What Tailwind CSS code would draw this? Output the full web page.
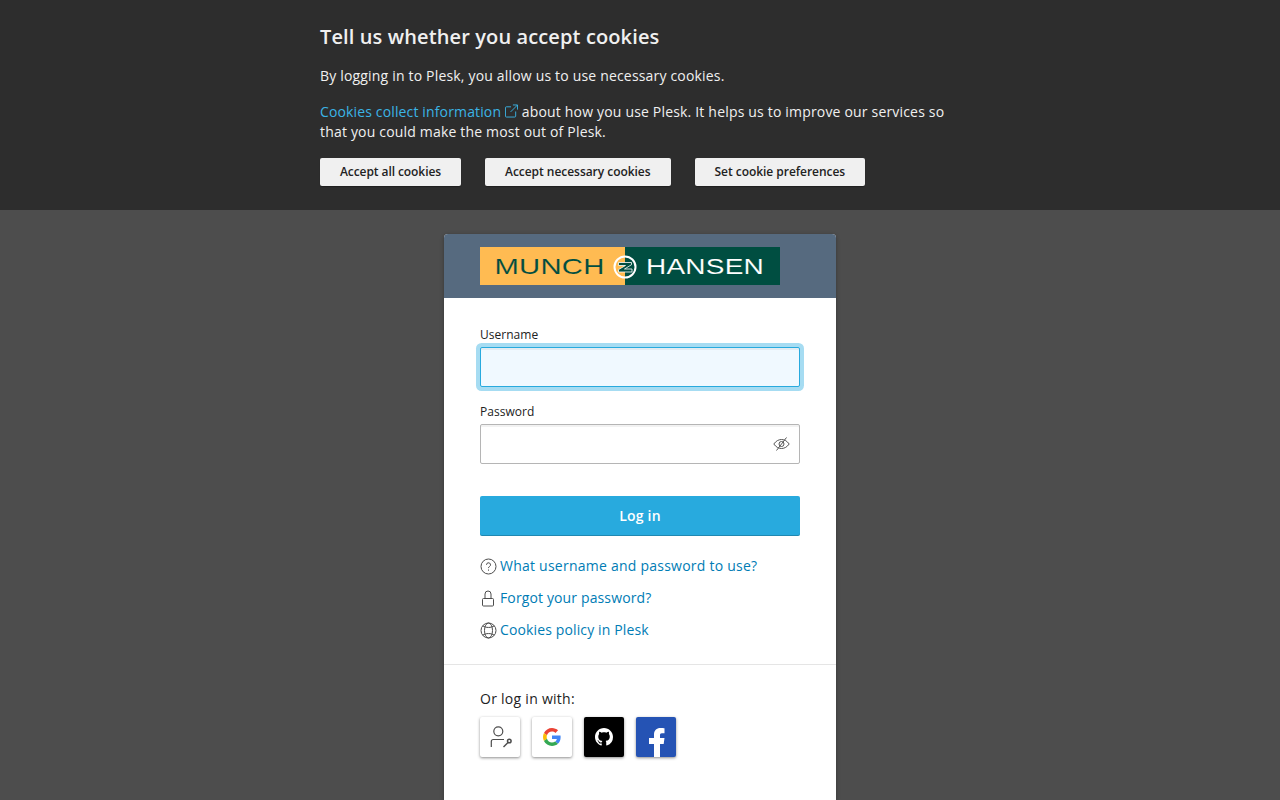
<!DOCTYPE html>
<html lang="en">
<head>
  <meta charset="UTF-8">
  <meta name="viewport" content="width=device-width, initial-scale=1.0">
  <title>Log in to Plesk</title>
  <script src="https://cdn.jsdelivr.net/npm/@tailwindcss/browser@4"></script>
</head>
<body class="h-[800px] overflow-hidden bg-[#4d4d4d] font-['Open_Sans',sans-serif] text-[14px] leading-[20px] tracking-[0.18px] text-[#222222]">

  <!-- Cookie banner -->
  <section class="h-[210px] bg-[#2d2d2d] pl-[320px] pt-[21px] text-[#f0f0f0]">
    <div class="w-[640px]">
      <h2 class="mb-[13px] text-[20px] leading-[32px] font-semibold tracking-[0.12px]">Tell us whether you accept cookies</h2>
      <p class="mb-[16px]">By logging in to Plesk, you allow us to use necessary cookies.</p>
      <p class="mb-[16px]">
        <a href="#" class="tracking-[0.14px] text-[#3bb4e6]">Cookies collect information
          <svg class="inline-block align-[-1px]" width="13" height="14" viewBox="0 0 14 14" fill="none" stroke="#3bb4e6"><path d="M6.500 2.500H1.500a1 1 0 0 0-1 1v9a1 1 0 0 0 1 1h9a1 1 0 0 0 1-1V7.500M8.500.5h5v5M13.500.5L6 8"/></svg></a>
        about how you use Plesk. It helps us to improve our services so that you could make the most out of Plesk.
      </p>
      <div class="flex gap-[24px] tracking-[-0.04px]">
        <button class="h-[28px] rounded-[2px] bg-[#f0f0f0] px-[20px] text-[12px] font-semibold tracking-[-0.08px] text-[#222222] shadow-[0_1px_1px_rgba(0,0,0,0.3)]">Accept all cookies</button>
        <button class="h-[28px] rounded-[2px] bg-[#f0f0f0] px-[20px] text-[12px] font-semibold text-[#222222] shadow-[0_1px_1px_rgba(0,0,0,0.3)]">Accept necessary cookies</button>
        <button class="h-[28px] rounded-[2px] bg-[#f0f0f0] px-[20px] text-[12px] font-semibold text-[#222222] shadow-[0_1px_1px_rgba(0,0,0,0.3)]">Set cookie preferences</button>
      </div>
    </div>
  </section>

  <!-- Login card -->
  <main class="mx-auto mt-[24px] w-[392px] overflow-hidden rounded-t-[4px] bg-white shadow-[0_1px_4px_rgba(0,0,0,0.3)]">
    <div class="flex h-[64px] items-center bg-[#566a7f] pl-[36px]">
      <svg width="300" height="38" viewBox="0 0 300 38">
        <rect width="145" height="38" fill="#ffbb52"/>
        <rect x="145" width="155" height="38" fill="#004e41"/>
        <text x="14.500" y="27" font-family="Liberation Sans, sans-serif" font-size="22" fill="#004e41" stroke="#ffbb52" stroke-width="0.1" textLength="110" lengthAdjust="spacingAndGlyphs">MUNCH</text>
        <circle cx="145" cy="20" r="10.500" fill="none" stroke="#ffffff" stroke-width="2"/>
        <path d="M138.500 15.500h13v2.200l-7 4.300h7.500v3h-13.500v-2.400l7-4.100h-7z" fill="#004e41" stroke="#ffffff" stroke-width="0.8"/>
        <text x="166" y="27" font-family="Liberation Sans, sans-serif" font-size="22" fill="#ffffff" stroke="#004e41" stroke-width="0.1" textLength="118" lengthAdjust="spacingAndGlyphs">HANSEN</text>
      </svg>
    </div>

    <form class="px-[36px] pt-[28px]">
      <label class="block text-[12px] leading-[17px] tracking-[0.03px] text-[#222222]">Username</label>
      <input type="text" class="mt-[4px] block h-[40px] w-full rounded-[2px] border border-[#28aade] bg-[#f0f9ff] shadow-[0_0_0_4px_#a6dcf2,inset_0_2px_0_rgba(0,0,0,0.05)] outline-none">

      <label class="mt-[16px] block text-[12px] leading-[17px] tracking-[0.03px] text-[#222222]">Password</label>
      <div class="relative mt-[4px]">
        <input type="password" class="block h-[40px] w-full rounded-[2px] border border-[#b5b5b5] bg-white shadow-[inset_0_2px_0_rgba(0,0,0,0.05)] outline-none">
        <svg class="absolute top-[12px] right-[10px]" width="17" height="16" viewBox="0 0 17 16" fill="none" stroke="#555555"><path d="M.8 8C3 5 5.500 3.500 8.500 3.500S14 5 16.200 8C14 11 11.500 12.500 8.500 12.500S3 11 .8 8z"/><circle cx="8.500" cy="8" r="2.500"/><path d="M13.500 1.500L3.500 14.500"/></svg>
      </div>

      <button type="button" class="mt-[32px] h-[40px] w-full rounded-[2px] bg-[#28aade] text-[14px] font-semibold text-white shadow-[inset_0_-1px_0_rgba(0,0,0,0.2)]">Log in</button>

      <div class="mt-[20px] flex h-[20px] items-center gap-[3px]">
        <svg width="17" height="17" viewBox="0 0 17 17" fill="none" stroke="#4d4d4d"><circle cx="8.500" cy="8.500" r="7.500"/><path d="M6.500 6.800a2 2 0 1 1 3 1.700c-.7.400-1 .8-1 1.600"/><path d="M8.500 11.500v1.200"/></svg>
        <a href="#" class="tracking-[0.24px] text-[#007cb5]">What username and password to use?</a>
      </div>
      <div class="mt-[12px] flex h-[20px] items-center gap-[3px]">
        <svg width="17" height="17" viewBox="0 0 17 17" fill="none" stroke="#4d4d4d"><rect x="2.500" y="8.500" width="11" height="7.500" rx="1"/><path d="M5 8.500V4a3 3 0 0 1 6 0v4.500"/></svg>
        <a href="#" class="tracking-[0.13px] text-[#007cb5]">Forgot your password?</a>
      </div>
      <div class="mt-[12px] flex h-[20px] items-center gap-[3px]">
        <svg width="17" height="17" viewBox="0 0 17 17" fill="none" stroke="#4d4d4d"><circle cx="8.500" cy="8.500" r="7.500"/><ellipse cx="8.500" cy="8.500" rx="4" ry="7.500"/><path d="M2.800 3.800C5.500 6 11.500 6 14.200 3.800M2.800 13.200C5.500 11 11.500 11 14.200 13.200"/></svg>
        <a href="#" class="tracking-[0.13px] text-[#007cb5]">Cookies policy in Plesk</a>
      </div>
    </form>

    <div class="mt-[24px] border-t border-[#e5e5e5] px-[36px] pt-[24px] pb-[43px]">
      <p class="tracking-[0.27px]">Or log in with:</p>
      <div class="mt-[8px] flex gap-[12px]">
        <a href="#" class="flex h-[40px] w-[40px] items-center justify-center rounded-[2px] bg-white shadow-[0_1px_3px_rgba(0,0,0,0.45)]">
          <svg width="24" height="24" viewBox="0 0 24 24" fill="none" stroke="#4d4d4d" stroke-width="1.200"><circle cx="10.300" cy="6.300" r="4.500"/><path d="M3.300 22V16.500a2 2 0 0 1 2-2H16"/><circle cx="21.300" cy="16" r="1.800" stroke-width="1.500"/><path d="M20 17.500L15.500 22" stroke-width="1.500"/></svg>
        </a>
        <a href="#" class="flex h-[40px] w-[40px] items-center justify-center rounded-[2px] bg-white shadow-[0_1px_3px_rgba(0,0,0,0.45)]">
          <svg width="18" height="18" viewBox="0 0 48 48"><path fill="#EA4335" d="M24 9.500c3.540 0 6.710 1.220 9.210 3.600l6.850-6.850C35.900 2.380 30.470 0 24 0 14.620 0 6.510 5.380 2.560 13.220l7.980 6.190C12.430 13.720 17.740 9.500 24 9.500z"/><path fill="#4285F4" d="M46.980 24.550c0-1.570-.15-3.090-.38-4.550H24v9.020h12.940c-.58 2.960-2.260 5.480-4.780 7.180l7.730 6c4.510-4.180 7.090-10.360 7.090-17.650z"/><path fill="#FBBC05" d="M10.530 28.590c-.48-1.450-.76-2.990-.76-4.590s.27-3.140.76-4.590l-7.980-6.190C.92 16.460 0 20.120 0 24c0 3.880.92 7.540 2.560 10.780l7.970-6.190z"/><path fill="#34A853" d="M24 48c6.480 0 11.930-2.130 15.890-5.810l-7.730-6c-2.150 1.450-4.920 2.300-8.160 2.300-6.260 0-11.570-4.220-13.470-9.910l-7.980 6.190C6.510 42.620 14.620 48 24 48z"/></svg>
        </a>
        <a href="#" class="flex h-[40px] w-[40px] items-center justify-center rounded-[2px] bg-black shadow-[0_1px_3px_rgba(0,0,0,0.45)]">
          <svg width="18" height="18" viewBox="0 0 16 16" fill="#ffffff"><path d="M8 0C3.580 0 0 3.580 0 8c0 3.540 2.290 6.530 5.470 7.590.4.070.55-.17.55-.38 0-.19-.01-.82-.01-1.490-2.010.37-2.530-.49-2.690-.94-.09-.23-.48-.94-.82-1.130-.28-.15-.68-.52-.01-.53.630-.01 1.080.58 1.230.82.720 1.210 1.870.87 2.330.66.070-.52.280-.87.510-1.070-1.780-.2-3.640-.89-3.640-3.950 0-.87.310-1.590.82-2.150-.08-.2-.36-1.020.08-2.120 0 0 .67-.21 2.200.82.640-.18 1.320-.27 2-.27s1.360.09 2 .27c1.530-1.040 2.200-.82 2.200-.82.440 1.100.16 1.920.08 2.120.51.560.82 1.270.82 2.150 0 3.070-1.870 3.750-3.650 3.950.29.250.54.730.54 1.480 0 1.070-.01 1.930-.01 2.200 0 .21.150.46.550.38A8.010 8.010 0 0 0 16 8c0-4.420-3.580-8-8-8z"/></svg>
        </a>
        <a href="#" class="flex h-[40px] w-[40px] items-end justify-center overflow-hidden rounded-[2px] bg-[#2553b4] shadow-[0_1px_3px_rgba(0,0,0,0.45)]">
          <svg width="40" height="40" viewBox="0 0 40 40" fill="#ffffff"><path d="M18 40V27h-5v-6h5v-3.500C18 13.500 20.500 11 24.500 11c1.800 0 3.500.2 4 .3v5h-2.600c-1.500 0-1.900.8-1.900 2V21h4.500l-.8 6H24v13z"/></svg>
        </a>
      </div>
    </div>
  </main>

</body>
</html>
